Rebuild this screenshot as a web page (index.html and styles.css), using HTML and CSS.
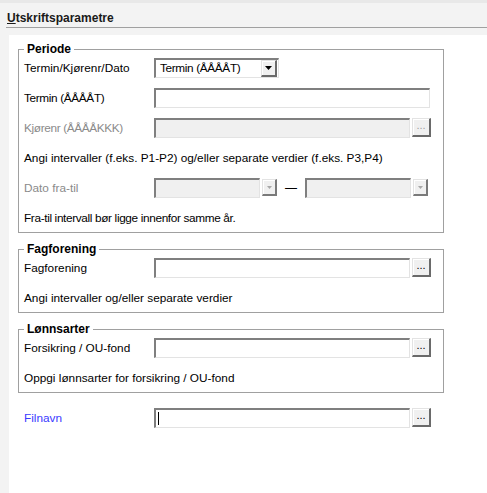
FILE: index.html
```html
<!DOCTYPE html>
<html lang="no">
<head>
<meta charset="utf-8">
<title>Utskriftsparametre</title>
<link rel="stylesheet" href="styles.css">
</head>
<body>
<div class="header"><span class="title"><u>U</u>tskriftsparametre</span></div>
<div class="panel">
  <fieldset class="group">
    <legend>Periode</legend>
    <div class="rows">
      <div class="row">
        <span class="label">Termin/Kjørenr/Dato</span>
        <div class="select">
          <span class="select-text tight">Termin (ÅÅÅÅT)</span>
          <span class="drop"><svg width="7" height="4" viewBox="0 0 7 4"><path d="M0 0h7L3.5 4z" fill="#000"/></svg></span>
        </div>
      </div>
      <div class="row">
        <span class="label tight">Termin (ÅÅÅÅT)</span>
        <div class="box wide"></div>
      </div>
      <div class="row">
        <span class="label disabled tight">Kjørenr (ÅÅÅÅKKK)</span>
        <div class="field"><div class="box off"></div><span class="btn off">...</span></div>
      </div>
      <div class="note">Angi intervaller (f.eks. P1-P2) og/eller separate verdier (f.eks. P3,P4)</div>
      <div class="row">
        <span class="label disabled">Dato fra-til</span>
        <div class="field">
          <div class="dsel"><div class="box off short"></div><span class="dbtn"><svg width="5" height="3" viewBox="0 0 5 3"><path d="M0 0h5L2.5 3z" fill="#a8a8a8"/></svg></span></div>
          <span class="dash">—</span>
          <div class="dsel"><div class="box off short"></div><span class="dbtn"><svg width="5" height="3" viewBox="0 0 5 3"><path d="M0 0h5L2.5 3z" fill="#a8a8a8"/></svg></span></div>
        </div>
      </div>
      <div class="note tight">Fra-til intervall bør ligge innenfor samme år.</div>
    </div>
  </fieldset>

  <fieldset class="group">
    <legend>Fagforening</legend>
    <div class="rows">
      <div class="row">
        <span class="label">Fagforening</span>
        <div class="field"><div class="box"></div><span class="btn">...</span></div>
      </div>
      <div class="note">Angi intervaller og/eller separate verdier</div>
    </div>
  </fieldset>

  <fieldset class="group">
    <legend>Lønnsarter</legend>
    <div class="rows">
      <div class="row">
        <span class="label">Forsikring / OU-fond</span>
        <div class="field"><div class="box"></div><span class="btn">...</span></div>
      </div>
      <div class="note">Oppgi lønnsarter for forsikring / OU-fond</div>
    </div>
  </fieldset>

  <div class="row filerow">
    <span class="label link">Filnavn</span>
    <div class="field"><div class="box"><span class="caret"></span></div><span class="btn">...</span></div>
  </div>
</div>
</body>
</html>
```
FILE: styles.css
```css
html, body {
  height: 100%;
}
body {
  margin: 0;
  background: #f3f3f3;
  border-top: 3px solid #e8e8e8;
  box-sizing: border-box;
  font-family: "Liberation Sans", Arial, sans-serif;
  font-size: 11.8px;
  color: #000;
  display: flex;
  flex-direction: column;
  overflow: hidden;
}
.header {
  margin-left: 6px;
  padding: 8px 0 2px 1px;
  border-bottom: 1px solid #a0a0a0;
}
.title {
  display: block;
  font-size: 12px;
  line-height: 14px;
  font-weight: bold;
  color: #1a1a1a;
}
.title u {
  text-decoration-thickness: 1px;
}
.panel {
  flex: 1;
  margin: 7px 0 0 9px;
  padding: 7px 0 0 9px;
  background: #fff;
}
.group {
  width: 426px;
  box-sizing: border-box;
  min-width: 0;
  margin: 0 0 9px;
  padding: 2px 5px 4px;
  border: 1px solid #a0a0a0;
}
.group legend {
  padding: 0 3px;
  font-size: 12px;
  line-height: 14px;
  font-weight: bold;
}
.rows {
  display: flex;
  flex-direction: column;
  gap: 10px;
}
.row {
  display: grid;
  grid-template-columns: 130px auto;
  align-items: center;
  height: 20px;
}
.label, .note {
  line-height: 20px;
  white-space: nowrap;
}
.note {
  height: 20px;
}
.tight {
  letter-spacing: -0.35px;
}
.disabled {
  color: #8a8a8a;
}
.link {
  color: #3a3aff;
}
.field {
  display: flex;
  align-items: flex-start;
  gap: 2px;
}
.box {
  width: 256px;
  height: 20px;
  box-sizing: border-box;
  border-style: solid;
  border-width: 2px 1px 1px 2px;
  border-color: #7f7f7f #e3e3e3 #e3e3e3 #7f7f7f;
  background: #fff;
}
.box.wide {
  width: 276px;
}
.box.off {
  background: #f0f0f0;
}
.box.short {
  width: 106px;
}
.btn {
  width: 19px;
  height: 19px;
  box-sizing: border-box;
  background: #f0f0f0;
  border-style: solid;
  border-width: 1px 2px 2px 1px;
  border-color: #e3e3e3 #6a6a6a #6a6a6a #e3e3e3;
  box-shadow: inset 1px 1px 0 #fff;
  text-align: center;
  line-height: 13px;
  font-size: 11px;
  color: #000;
}
.btn.off {
  color: #a0a0a0;
}
.select {
  width: 125px;
  height: 20px;
  box-sizing: border-box;
  border-style: solid;
  border-width: 2px 1px 1px 2px;
  border-color: #7f7f7f #e3e3e3 #e3e3e3 #7f7f7f;
  background: #fff;
  display: flex;
  justify-content: space-between;
}
.select-text {
  padding-left: 4px;
  line-height: 17px;
}
.drop {
  width: 16px;
  height: 17px;
  margin-right: 1px;
  box-sizing: border-box;
  background: #f0f0f0;
  border-style: solid;
  border-width: 1px 2px 2px 1px;
  border-color: #e3e3e3 #6a6a6a #6a6a6a #e3e3e3;
  box-shadow: inset 1px 1px 0 #fff;
  display: flex;
  align-items: center;
  justify-content: center;
}
.dsel {
  display: flex;
  gap: 2px;
}
.dbtn {
  width: 15px;
  height: 17px;
  margin-top: 1px;
  box-sizing: border-box;
  background: #f0f0f0;
  border-style: solid;
  border-width: 1px 2px 2px 1px;
  border-color: #e3e3e3 #7a7a7a #7a7a7a #e3e3e3;
  box-shadow: inset 1px 1px 0 #fff;
  display: flex;
  align-items: center;
  justify-content: center;
}
.dash {
  width: 24px;
  text-align: center;
  line-height: 20px;
  font-size: 12px;
}
.filerow {
  margin-top: 15px;
  padding-left: 6px;
}
.caret {
  display: block;
  width: 0;
  height: 13px;
  margin: 2px 0 0 2px;
  border-left: 1px solid #000;
}
```
